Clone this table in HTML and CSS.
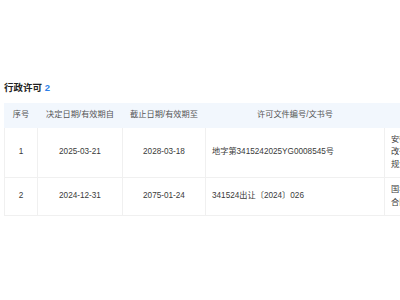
FILE: index.html
```html
<!DOCTYPE html>
<html lang="zh-CN">
<head>
<meta charset="utf-8">
<link rel="stylesheet" href="styles.css">
</head>
<body>
<div class="page">
  <h2 class="title">行政许可 <span class="count">2</span></h2>
  <table class="grid">
    <colgroup>
      <col class="c-idx">
      <col class="c-date">
      <col class="c-date2">
      <col class="c-no">
      <col class="c-org">
    </colgroup>
    <thead>
      <tr>
        <th>序号</th>
        <th>决定日期/有效期自</th>
        <th>截止日期/有效期至</th>
        <th>许可文件编号/文书号</th>
        <th>许可文件名称</th>
      </tr>
    </thead>
    <tbody>
      <tr>
        <td>1</td>
        <td>2025-03-21</td>
        <td>2028-03-18</td>
        <td class="left">地字第3415242025YG0008545号</td>
        <td class="left">安徽省舒城县自然资源和<br>改征土地用途规划许可<br>规划条件核实</td>
      </tr>
      <tr>
        <td>2</td>
        <td>2024-12-31</td>
        <td>2075-01-24</td>
        <td class="left">341524出让〔2024〕026</td>
        <td class="left">国标建设用地使用权出让<br>合同</td>
      </tr>
    </tbody>
  </table>
</div>
</body>
</html>
```
FILE: styles.css
```css
html, body {
  margin: 0;
  padding: 0;
  background: #ffffff;
  overflow: hidden;
}
.page {
  width: 520px;
  padding: 82px 0 0 4px;
  font-family: "Liberation Sans", "Noto Sans CJK SC", sans-serif;
  color: #333333;
}
.title {
  margin: 0 0 9px 0;
  font-size: 9.5px;
  line-height: 12px;
  font-weight: bold;
  color: #222222;
}
.count {
  color: #2e7fe8;
}
.grid {
  border-collapse: collapse;
  table-layout: fixed;
  width: 500px;
  font-size: 8.2px;
  line-height: 12.5px;
}
.c-idx { width: 33px; }
.c-date { width: 85px; }
.c-date2 { width: 83px; }
.c-no { width: 179px; }
.c-org { width: 120px; }
.grid th {
  background: #f2f7fd;
  color: #555555;
  font-weight: normal;
  padding: 5px 6px;
  text-align: center;
  border: 1px solid #f2f7fd;
  white-space: nowrap;
}
.grid td {
  padding: 6px 6px;
  text-align: center;
  border: 1px solid #f0f0f0;
  color: #3a3a3a;
  white-space: nowrap;
}
.grid .left {
  text-align: left;
}
```
